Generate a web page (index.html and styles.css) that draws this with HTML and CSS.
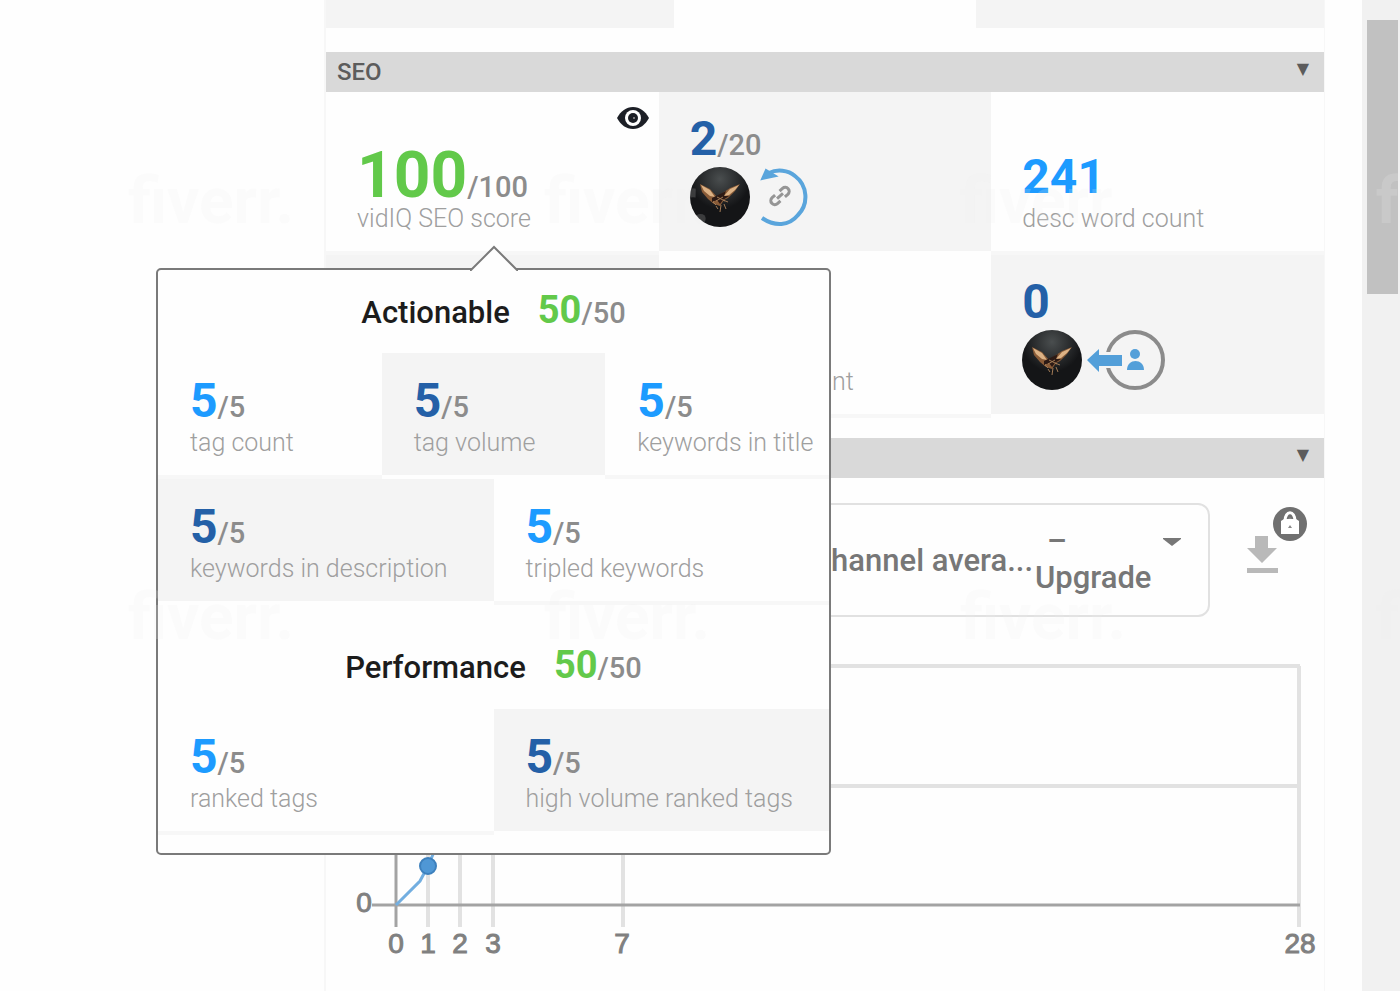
FILE: index.html
```
<!DOCTYPE html>
<html lang="en">

<head>
    <meta charset="UTF-8" />
    <title>SEO score</title>
    <meta name="viewport" content="width=device-width, initial-scale=1.0" />
    <link rel="stylesheet" href="styles.css">
</head>

<body>
    <!-- shared icon shapes -->
    <svg class="defs" aria-hidden="true">
        <defs>
            <radialGradient id="sheen" cx="50%" cy="20%" r="50%">
                <stop offset="0" stop-color="#4a4e4f" />
                <stop offset="1" stop-color="#141517" />
            </radialGradient>
            <symbol id="avatar" viewBox="0 0 60 60">
                <circle cx="30" cy="30" r="30" fill="url(#sheen)" />
                <path d="M10 17l10 5 7 8 4-3 9-6 10-4-5 7-7 7-4 2-4 6-6-2-6-5-6-7z" fill="#8a5c38" />
                <path d="M11 18l9 5 5 7-5-1-6-5zM49 18l-9 4-6 7 5-1 6-5z" fill="#dcb285" />
                <path d="M22 31l6-3 8-4-2 5 5 0-6 4-3 4-3-4-5 2z" fill="#2c1a15" />
                <path d="M23 35l3 3m0 1l2 3m3-4l-1 7m4-8l2 5m-3-9l5 2m-14-1l-1 2M27 30l8 4m-9 0l7-4" stroke="#a37b56" stroke-width="1" fill="none" />
            </symbol>
        </defs>
    </svg>

    <main class="panel">
        <div class="top-row">
            <div class="shade"></div>
            <div></div>
            <div class="shade"></div>
        </div>

        <section>
            <button class="section-bar" type="button"><span>SEO</span><span class="caret">▼</span></button>
            <div class="stats">
                <div class="cell anchor">
                    <button class="eye" type="button" aria-label="Show score details">
                        <svg viewBox="0 0 34 24" width="34" height="24">
                            <path d="M1 12C5 5 10 1 17 1s12 4 16 11c-4 7-9 11-16 11S5 19 1 12z" fill="#1c1f26" />
                            <circle cx="17" cy="12" r="8" fill="#fff" />
                            <circle cx="17" cy="12" r="5" fill="#1c1f26" />
                            <circle cx="18" cy="12" r="1" fill="#999" />
                        </svg>
                    </button>
                    <div class="score xl"><b class="green">100</b><span>/100</span></div>
                    <div class="label">vidIQ SEO score</div>

                    <div class="popover" role="dialog" aria-label="Score details">
                        <svg class="pointer" viewBox="0 0 48 26" width="48" height="26" aria-hidden="true">
                            <path d="M0 26L2 24 24 2l22 22 2 2z" fill="#fefefe" />
                            <path d="M0 25h1L24 2l23 23h1" fill="none" stroke="#7a7a7a" stroke-width="2" />
                        </svg>
                        <div class="group-head"><h3>Actionable</h3><div class="score md"><b class="green">50</b><span>/50</span></div></div>
                        <div class="group three">
                            <div class="item">
                                <div class="score"><b>5</b><span>/5</span></div>
                                <div class="label">tag count</div>
                            </div>
                            <div class="item shade">
                                <div class="score"><b>5</b><span>/5</span></div>
                                <div class="label">tag volume</div>
                            </div>
                            <div class="item">
                                <div class="score"><b>5</b><span>/5</span></div>
                                <div class="label">keywords in title</div>
                            </div>
                        </div>
                        <div class="group two">
                            <div class="item shade">
                                <div class="score"><b>5</b><span>/5</span></div>
                                <div class="label">keywords in description</div>
                            </div>
                            <div class="item">
                                <div class="score"><b>5</b><span>/5</span></div>
                                <div class="label">tripled keywords</div>
                            </div>
                        </div>
                        <div class="group-head next"><h3>Performance</h3><div class="score md"><b class="green">50</b><span>/50</span></div></div>
                        <div class="group two">
                            <div class="item">
                                <div class="score"><b>5</b><span>/5</span></div>
                                <div class="label">ranked tags</div>
                            </div>
                            <div class="item shade">
                                <div class="score"><b>5</b><span>/5</span></div>
                                <div class="label">high volume ranked tags</div>
                            </div>
                        </div>
                    </div>
                </div>

                <div class="cell shade">
                    <div class="score"><b>2</b><span>/20</span></div>
                    <div class="icons">
                        <svg width="60" height="60"><use href="#avatar" /></svg>
                        <svg viewBox="0 0 60 60" width="60" height="60">
                            <path d="M14 6C22 2 33 3 40 9a26 26 0 0 1 3 39c-9 11-23 12-36 3" fill="none" stroke="#5aa5dc" stroke-width="4" />
                            <path d="M7 12l4-9 10 6z" fill="#5aa5dc" stroke="#5aa5dc" stroke-width="2" />
                            <g fill="none" stroke="#959595" stroke-width="3" transform="rotate(-42 25 29)">
                                <path d="M22 25h-4a4 4 0 0 0 0 8h4M28 25h4a4 4 0 0 1 0 8h-4M21 29h8" />
                            </g>
                        </svg>
                    </div>
                </div>

                <div class="cell">
                    <div class="score"><b>241</b></div>
                    <div class="label">desc word count</div>
                </div>

                <div class="cell shade"></div>

                <div class="cell">
                    <div class="label">desc link count</div>
                </div>

                <div class="cell shade">
                    <div class="score"><b>0</b></div>
                    <div class="icons">
                        <svg width="60" height="60"><use href="#avatar" /></svg>
                        <svg viewBox="0 0 80 60" width="80" height="60">
                            <circle cx="48" cy="30" r="28" fill="none" stroke="#8b8b8b" stroke-width="4" />
                            <path d="M17 22h20v16H17z" fill="#f4f4f4" />
                            <path d="M0 30l12-11v6h23v11H12v6z" fill="#539fd9" />
                            <circle cx="48" cy="24" r="5" fill="#539fd9" />
                            <path d="M40 40c0-12 17-12 17 0z" fill="#539fd9" />
                        </svg>
                    </div>
                </div>
            </div>
        </section>

        <section>
            <button class="section-bar" type="button" aria-label="Toggle chart section"><span></span><span class="caret">▼</span></button>
            <div class="toolbar">
                <button class="picker" type="button">
                    <span class="picker-name">channel avera...</span>
                    <span class="picker-plan"><span class="dash">–</span>Upgrade</span>
                    <svg viewBox="0 0 18 8" width="18" height="8" aria-hidden="true"><path d="M0 0h18v1l-9 7-9-7z" fill="#777" /></svg>
                </button>
                <button class="download" type="button" aria-label="Download">
                    <svg viewBox="0 0 64 72" width="64" height="72">
                        <path d="M11 33h13v12h9L18 60 3 45h8zM3 65h31v5H3z" fill="#b9b9b9" />
                        <circle cx="46" cy="21" r="17" fill="#707070" />
                        <path d="M41 18c0-11 10-11 10 0" fill="none" stroke="#fff" stroke-width="3" />
                        <path d="M37 18l3-2h12l3 2v13H37z" fill="#fff" />
                        <path d="M44 16h4l-2-2zM44 25h4l-2-3z" fill="#888" />
                    </svg>
                </button>
            </div>
            <svg class="chart" viewBox="0 0 998 330" role="img" aria-label="Views per day">
                <g stroke="#e2e2e2" stroke-width="4">
                    <path d="M70 27h904M70 147h904" />
                    <path d="M102 27v261M134 27v261M167 27v261M297 27v261M973 27v261" />
                </g>
                <path d="M46 266h928M70 27v261" stroke="#a3a3a3" stroke-width="3" />
                <path d="M70 266l24-24 8-15 6-14" fill="none" stroke="#72aee0" stroke-width="3" />
                <circle cx="102" cy="227" r="8" fill="#4f97d5" stroke="#3d80bd" stroke-width="2" />
                <g class="axis">
                    <text x="38" y="273">0</text>
                    <text x="70" y="314">0</text>
                    <text x="102" y="314">1</text>
                    <text x="134" y="314">2</text>
                    <text x="167" y="314">3</text>
                    <text x="296" y="314">7</text>
                    <text x="974" y="314">28</text>
                </g>
            </svg>
        </section>
    </main>

    <div class="scrollbar"><div class="thumb"></div></div>

    <div class="watermark" aria-hidden="true">
        <span>fiverr.</span><span>fiverr.</span><span>fiverr.</span><span>fiverr.</span>
        <span>fiverr.</span><span>fiverr.</span><span>fiverr.</span><span>fiverr.</span>
    </div>
</body>

</html>
```
FILE: styles.css
```
* {
    box-sizing: border-box;
}

body {
    position: relative;
    margin: 0;
    padding-left: 324px;
    display: flex;
    min-height: 100vh;
    font-family: Roboto, sans-serif;
    background-color: #fefefe;
    color: #8c8c8c;
    overflow: hidden;
}

button {
    border: 0;
    padding: 0;
    background: none;
    font: inherit;
    color: inherit;
    cursor: pointer;
}

svg {
    display: block;
}

.defs {
    position: absolute;
    width: 0;
    height: 0;
}

.panel {
    flex: 1;
    border: 2px solid #f7f7f7;
    border-width: 0 1px 0 2px;
    margin-right: 37px;
}

.shade {
    background: #f4f4f4;
}

.top-row {
    display: grid;
    grid-template-columns: 348fr 301fr 348fr;
    height: 28px;
    margin-bottom: 24px;
}

.section-bar {
    display: flex;
    justify-content: space-between;
    align-items: center;
    width: 100%;
    height: 40px;
    padding: 0 15px 0 11px;
    background: #d9d9d9;
    color: #5c5c5c;
    font-size: 24px;
    font-weight: 500;
}

.caret {
    font-family: "DejaVu Sans", sans-serif;
    font-size: 16px;
    line-height: 24px;
    padding-bottom: 6px;
}

/* stat cells */
.stats {
    display: grid;
    grid-template-columns: repeat(3, 1fr);
    grid-auto-rows: 163px;
    margin-bottom: 20px;
}

.cell,
.item {
    display: flex;
    flex-direction: column;
    justify-content: flex-end;
    padding: 0 0 16px 31px;
    border-bottom: 4px solid #f7f7f7;
    background: #fefefe;
}

.item {
    padding-left: 32px;
}

.cell.shade,
.item.shade {
    background: #f4f4f4;
    border-bottom-color: #fefefe;
}

.cell.shade {
    padding-bottom: 24px;
}

.anchor {
    position: relative;
}

.score {
    font-size: 29px;
    font-weight: 500;
    line-height: 40px;
    white-space: nowrap;
}

.score b {
    font-size: 48px;
    font-weight: 700;
    color: #1d9bff;
}

.shade .score b {
    color: #2460a7;
}

.score .green {
    color: #62c94a;
}

.xl {
    line-height: 32px;
}

.xl b {
    font-size: 64px;
}

.md b {
    font-size: 38px;
}

.label {
    font-size: 25px;
    font-weight: 300;
    line-height: 32px;
    color: #9f9f9f;
    white-space: nowrap;
}

.icons {
    display: flex;
    gap: 5px;
    margin-top: 2px;
}

.eye {
    position: absolute;
    top: 14px;
    right: 9px;
}

/* score details */
.popover {
    position: absolute;
    z-index: 2;
    top: 176px;
    left: -170px;
    width: 675px;
    padding-bottom: 18px;
    border: 2px solid #7a7a7a;
    border-radius: 5px;
    background: #fefefe;
}

.pointer {
    position: absolute;
    bottom: 100%;
    left: 50%;
    margin-left: -24px;
    margin-bottom: -1px;
}

.group-head {
    display: flex;
    justify-content: center;
    align-items: baseline;
    gap: 28px;
    height: 83px;
    padding-top: 20px;
}

.group-head.next {
    height: 104px;
    padding-top: 40px;
}

.group-head h3 {
    margin: 0;
    font-size: 31px;
    font-weight: 500;
    line-height: 40px;
    color: #1c1c1c;
}

.group {
    display: grid;
    grid-auto-rows: 126px;
}

.three {
    grid-template-columns: repeat(3, 1fr);
}

.two {
    grid-template-columns: repeat(2, 1fr);
}

/* chart */
.toolbar {
    display: flex;
    justify-content: flex-end;
    gap: 34px;
    padding: 25px 16px 22px 0;
}

.picker {
    display: flex;
    align-items: center;
    justify-content: flex-end;
    width: 560px;
    height: 114px;
    padding-right: 27px;
    border: 2px solid #e1e1e1;
    border-radius: 12px;
    font-size: 31px;
    font-weight: 500;
    color: #777;
}

.picker-plan {
    width: 120px;
    padding-left: 2px;
    line-height: 36px;
    text-align: left;
}

.dash {
    display: block;
    padding-left: 12px;
}

.picker svg {
    margin: 0 0 36px 10px;
}

.download {
    align-self: flex-start;
}

.chart {
    width: 100%;
}

.axis {
    font-family: "Liberation Sans", sans-serif;
    font-size: 28px;
    fill: #808080;
    stroke: #808080;
    text-anchor: middle;
}

/* page scrollbar */
.scrollbar {
    width: 38px;
    padding: 20px 2px 0 5px;
    background: #f1f1f1;
}

.thumb {
    height: 274px;
    background: #c1c1c1;
}

.watermark {
    position: absolute;
    z-index: 3;
    top: 170px;
    left: 128px;
    right: 0;
    display: grid;
    grid-template-columns: repeat(4, 416px);
    row-gap: 352px;
    overflow: hidden;
    font-size: 64px;
    font-weight: 700;
    line-height: 64px;
    color: rgba(240, 240, 240, 0.18);
    pointer-events: none;
}
```
